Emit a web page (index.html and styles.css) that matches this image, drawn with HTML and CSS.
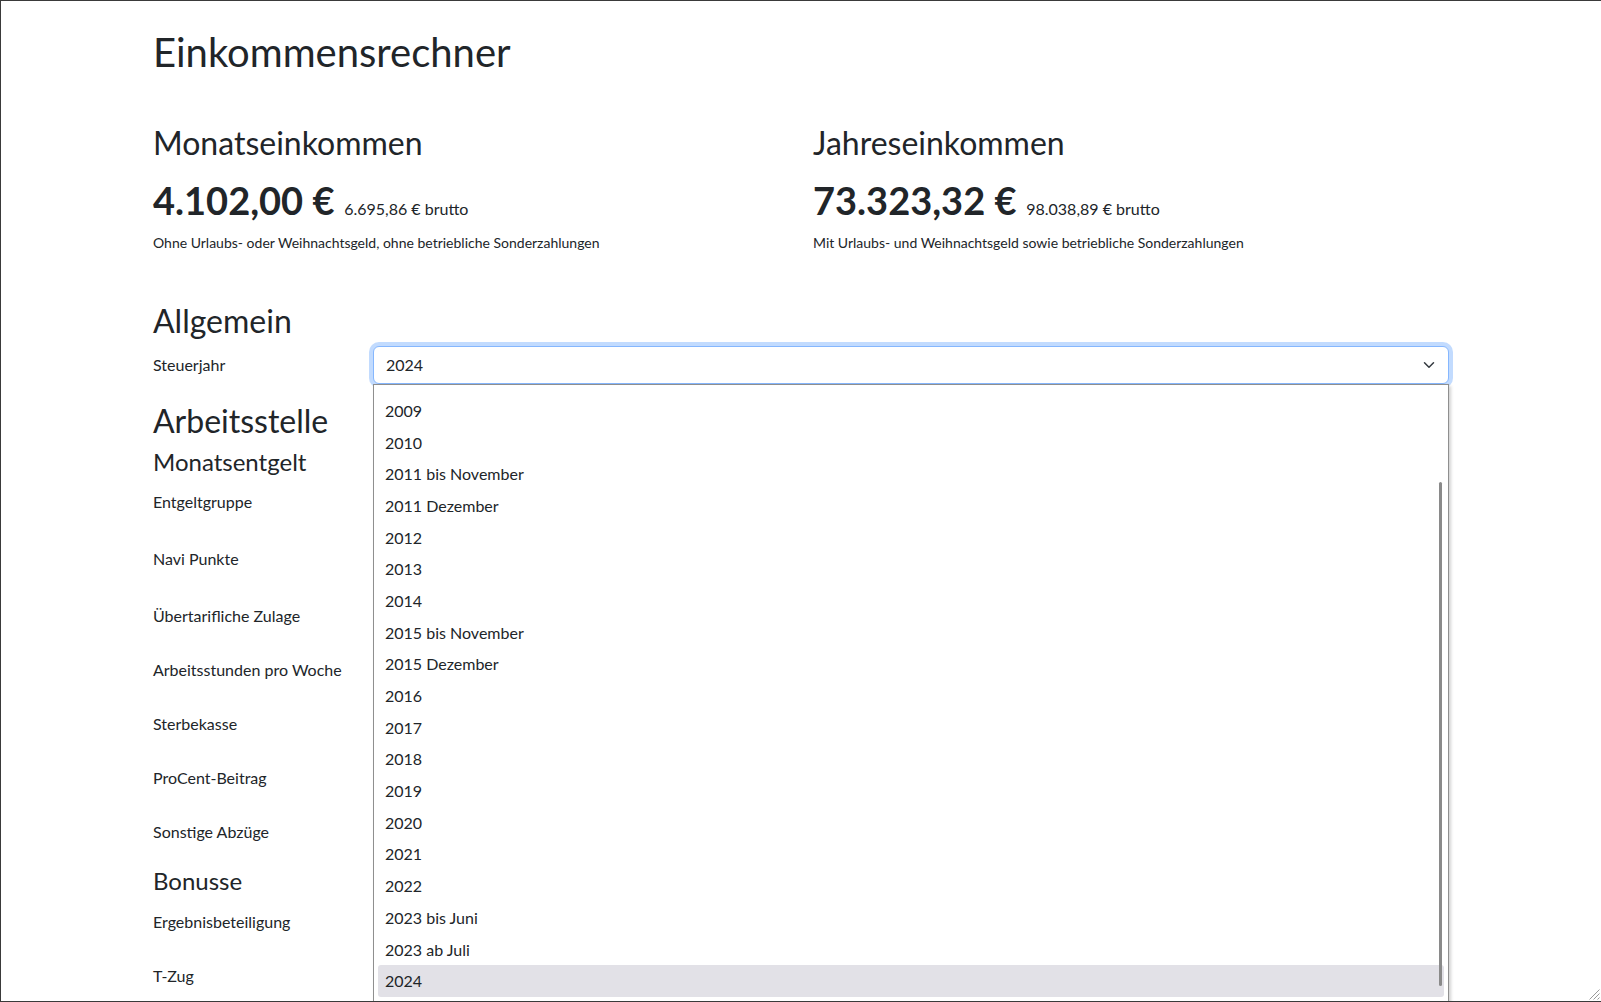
FILE: index.html
```html
<!DOCTYPE html>
<html lang="de">
<head>
<meta charset="utf-8">
<title>Einkommensrechner</title>
<link rel="stylesheet" href="styles.css">
</head>
<body>
<div class="frame">
  <main class="container">
    <h1 class="title">Einkommensrechner</h1>

    <section class="summary">
      <div class="summary-col">
        <h2 class="h2">Monatseinkommen</h2>
        <p class="amount"><span class="net">4.102,00 €</span> <span class="gross">6.695,86 € brutto</span></p>
        <p class="note">Ohne Urlaubs- oder Weihnachtsgeld, ohne betriebliche Sonderzahlungen</p>
      </div>
      <div class="summary-col">
        <h2 class="h2">Jahreseinkommen</h2>
        <p class="amount"><span class="net">73.323,32 €</span> <span class="gross">98.038,89 € brutto</span></p>
        <p class="note">Mit Urlaubs- und Weihnachtsgeld sowie betriebliche Sonderzahlungen</p>
      </div>
    </section>

    <h2 class="h2 sec-general">Allgemein</h2>
    <div class="form-row row-year">
      <label class="form-label">Steuerjahr</label>
      <div class="select-wrap">
        <div class="select">2024
          <svg class="chevron" width="16" height="12" viewBox="0 0 16 16"><path d="m2 5 6 6 6-6" fill="none" stroke="#343a40" stroke-width="2" stroke-linecap="round" stroke-linejoin="round"/></svg>
        </div>
        <div class="dropdown">
          <div class="option">2009</div>
          <div class="option">2010</div>
          <div class="option">2011 bis November</div>
          <div class="option">2011 Dezember</div>
          <div class="option">2012</div>
          <div class="option">2013</div>
          <div class="option">2014</div>
          <div class="option">2015 bis November</div>
          <div class="option">2015 Dezember</div>
          <div class="option">2016</div>
          <div class="option">2017</div>
          <div class="option">2018</div>
          <div class="option">2019</div>
          <div class="option">2020</div>
          <div class="option">2021</div>
          <div class="option">2022</div>
          <div class="option">2023 bis Juni</div>
          <div class="option">2023 ab Juli</div>
          <div class="option selected">2024</div>
          <div class="thumb"></div>
        </div>
      </div>
    </div>

    <h2 class="h2 sec-work">Arbeitsstelle</h2>
    <h4 class="h4">Monatsentgelt</h4>
    <div class="form-row"><label class="form-label">Entgeltgruppe</label><div class="field f1"></div></div>
    <div class="form-row"><label class="form-label">Navi Punkte</label><div class="field f2"></div></div>
    <div class="form-row"><label class="form-label">Übertarifliche Zulage</label><div class="field f3"></div></div>
    <div class="form-row"><label class="form-label">Arbeitsstunden pro Woche</label><div class="field"></div></div>
    <div class="form-row"><label class="form-label">Sterbekasse</label><div class="field"></div></div>
    <div class="form-row"><label class="form-label">ProCent-Beitrag</label><div class="field"></div></div>
    <div class="form-row"><label class="form-label">Sonstige Abzüge</label><div class="field"></div></div>

    <h4 class="h4 sec-bonus">Bonusse</h4>
    <div class="form-row"><label class="form-label">Ergebnisbeteiligung</label><div class="field"></div></div>
    <div class="form-row"><label class="form-label">T-Zug</label><div class="field"></div></div>
  </main>
  <svg class="grip" width="12" height="12" viewBox="0 0 12 12"><path d="M11.5 1.5 1.5 11.5M11.5 5.5 5.5 11.5M11.5 9.5 9.5 11.5" stroke="#9a9a9a" stroke-width="1" fill="none"/></svg>
</div>
</body>
</html>
```

FILE: styles.css
```css
html, body {
  margin: 0;
  padding: 0;
  background: #fff;
}

body {
  font-family: Lato, "Open Sans", sans-serif;
  color: #212529;
  font-size: 16px;
  line-height: 24px;
}

.frame {
  position: relative;
  height: 1002px;
  box-sizing: border-box;
  border-left: 1px solid #3a3a3a;
  border-top: 1px solid #3a3a3a;
  border-bottom: 1px solid #3a3a3a;
  overflow: hidden;
}

.container {
  width: 1320px;
  margin: 0 auto;
  padding: 0 12px;
  box-sizing: border-box;
}

.title {
  font-size: 40px;
  line-height: 48px;
  font-weight: 400;
  margin: 27px 0 0;
}

.summary {
  display: grid;
  grid-template-columns: 1fr 1fr;
  column-gap: 24px;
  margin-top: 48px;
}

.h2 {
  font-size: 32px;
  line-height: 38.4px;
  font-weight: 400;
  margin: 0;
}

.h4 {
  font-size: 24px;
  line-height: 28.8px;
  font-weight: 400;
  margin: 8px 0 6px;
}

.amount {
  margin: 16px 0 0;
  font-size: 38px;
  line-height: 44px;
  white-space: nowrap;
}

.net {
  font-weight: 700;
}

.gross {
  font-size: 16px;
  line-height: 16px;
}

.note {
  margin: 10px 0 0;
  font-size: 14px;
  line-height: 21px;
}

.sec-general {
  margin-top: 49px;
}

.form-row {
  display: grid;
  grid-template-columns: 196px 1fr;
  column-gap: 24px;
  margin-bottom: 16px;
}

.row-year {
  margin-top: 5px;
}

.form-label {
  padding-top: 7px;
  line-height: 24px;
  font-size: 16px;
  white-space: nowrap;
}

.select-wrap {
  position: relative;
}

.select {
  position: relative;
  height: 38px;
  box-sizing: border-box;
  border: 1px solid #86b7fe;
  border-radius: 6px;
  box-shadow: 0 0 0 4px rgba(13, 110, 253, 0.25);
  padding: 6px 36px 6px 12px;
  font-size: 16px;
  line-height: 24px;
  background: #fff;
}

.chevron {
  position: absolute;
  right: 11px;
  top: 12px;
}

.dropdown {
  position: absolute;
  top: 38px;
  left: 0;
  right: 0;
  height: 620px;
  box-sizing: border-box;
  background: #fff;
  border: 1px solid #8f8f8f;
  box-shadow: 2px 2px 3px rgba(0, 0, 0, 0.18);
  padding: 10px 4px;
  z-index: 10;
}

.option {
  height: 31.7px;
  line-height: 31.7px;
  padding-left: 7px;
  font-size: 16px;
  border-radius: 3px;
  white-space: nowrap;
}

.option.selected {
  background: #e2e1e7;
}

.thumb {
  position: absolute;
  right: 6px;
  top: 97px;
  width: 3px;
  height: 504px;
  background: #8a8a8a;
  border-radius: 2px;
}

.sec-work {
  margin-top: 18px;
}

.field {
  height: 38px;
  border: 1px solid #dee2e6;
  border-radius: 6px;
  box-sizing: border-box;
}

.f1 { height: 40.5px; }
.f2 { height: 41px; }
.f3 { height: 38.5px; }

.sec-bonus {
  margin-top: 0;
  margin-bottom: 7px;
}

.grip {
  position: absolute;
  right: 1px;
  bottom: 1px;
}
```
